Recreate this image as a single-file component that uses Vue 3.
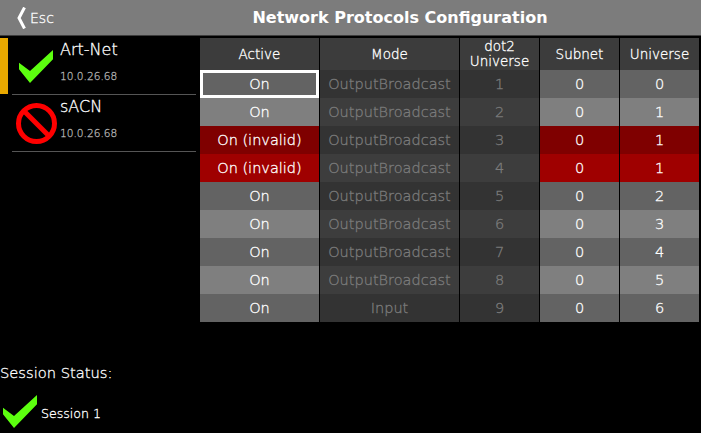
<script setup>
const rows = [
  { active: 'On', mode: 'OutputBroadcast', dot: 1, subnet: 0, universe: 0, selected: true },
  { active: 'On', mode: 'OutputBroadcast', dot: 2, subnet: 0, universe: 1 },
  { active: 'On (invalid)', mode: 'OutputBroadcast', dot: 3, subnet: 0, universe: 1, invalid: true },
  { active: 'On (invalid)', mode: 'OutputBroadcast', dot: 4, subnet: 0, universe: 1, invalid: true },
  { active: 'On', mode: 'OutputBroadcast', dot: 5, subnet: 0, universe: 2 },
  { active: 'On', mode: 'OutputBroadcast', dot: 6, subnet: 0, universe: 3 },
  { active: 'On', mode: 'OutputBroadcast', dot: 7, subnet: 0, universe: 4 },
  { active: 'On', mode: 'OutputBroadcast', dot: 8, subnet: 0, universe: 5 },
  { active: 'On', mode: 'Input', dot: 9, subnet: 0, universe: 6 },
]
const checkPath = 'M0 12.7 L11 21 L34 0 L34 9.3 L11 33 L0 19.3 Z'
</script>

<template>
  <div class="screen">
    <header class="topbar">
      <div class="esc">
        <svg class="chevron" width="9" height="22" viewBox="0 0 9 22">
          <path d="M7.5 0.5 L2 11 L7.5 21.5" fill="none" stroke="#fff" stroke-width="3" />
        </svg>
        <span>Esc</span>
      </div>
      <div class="title">Network Protocols Configuration</div>
    </header>

    <div class="main">
      <aside class="side">
        <div class="protocols">
          <div class="protocol selected">
            <div class="icon-box">
              <svg width="34" height="33" viewBox="0 0 34 33">
                <path :d="checkPath" fill="#5cff0f" />
              </svg>
            </div>
            <div class="proto-text">
              <div class="proto-name">Art-Net</div>
              <div class="proto-ip">10.0.26.68</div>
            </div>
          </div>
          <div class="protocol">
            <div class="icon-box">
              <svg width="41" height="41" viewBox="0 0 41 41">
                <circle cx="20.5" cy="20.5" r="18" fill="none" stroke="#ff0000" stroke-width="5" />
                <path d="M7.5 7.5 L33.5 33.5" stroke="#ff0000" stroke-width="5" />
              </svg>
            </div>
            <div class="proto-text">
              <div class="proto-name">sACN</div>
              <div class="proto-ip">10.0.26.68</div>
            </div>
          </div>
        </div>
        <div class="session">
          <div class="session-label">Session Status:</div>
          <div class="session-row">
            <svg width="34" height="33" viewBox="0 0 34 33">
              <path :d="checkPath" fill="#5cff0f" />
            </svg>
            <span>Session 1</span>
          </div>
        </div>
      </aside>

      <div class="table">
        <div class="row head">
          <div class="cell">Active</div>
          <div class="cell">Mode</div>
          <div class="cell two">dot2<br>Universe</div>
          <div class="cell">Subnet</div>
          <div class="cell">Universe</div>
        </div>
        <div v-for="(r, i) in rows" :key="i" class="row" :class="{ even: i % 2 === 1, invalid: r.invalid }">
          <div class="cell edit" :class="{ selected: r.selected }"><span>{{ r.active }}</span></div>
          <div class="cell ro">{{ r.mode }}</div>
          <div class="cell ro">{{ r.dot }}</div>
          <div class="cell edit">{{ r.subnet }}</div>
          <div class="cell edit">{{ r.universe }}</div>
        </div>
      </div>
    </div>
  </div>
</template>

<style>
html, body { background: #000; }
</style>

<style scoped>
.screen {
  width: 701px;
  height: 433px;
  background: #000;
  color: #fff;
  font-family: "DejaVu Sans", sans-serif;
  font-weight: 200;
  -webkit-text-stroke: 0.3px currentColor;
  overflow: hidden;
}
.topbar {
  height: 36px;
  box-sizing: border-box;
  background: #7c7c7c;
  border-bottom: 1px solid #3c3c3c;
  display: flex;
  align-items: center;
}
.esc {
  width: 100px;
  display: flex;
  align-items: center;
  gap: 4px;
  padding-left: 17px;
  box-sizing: border-box;
  font-size: 14px;
}
.title {
  width: 600px;
  text-align: center;
  font-size: 16px;
  font-weight: bold;
  -webkit-text-stroke: 0;
}
.main {
  display: flex;
  padding-top: 2px;
  height: 395px;
}
.side {
  width: 200px;
  display: flex;
  flex-direction: column;
  justify-content: space-between;
}
.protocol {
  height: 57px;
  margin-left: 12px;
  width: 184px;
  border-bottom: 1px solid #555;
  display: flex;
  align-items: center;
  position: relative;
  box-sizing: border-box;
}
.protocol.selected::before {
  content: '';
  position: absolute;
  left: -12px;
  top: 0;
  width: 8px;
  height: 56px;
  background: #e8a800;
}
.icon-box {
  flex: none;
  width: 48px;
  display: flex;
  justify-content: center;
}
.proto-text { align-self: flex-start; }
.proto-name { font-size: 16px; line-height: 24px; }
.proto-ip { font-size: 10.6px; line-height: 14px; color: #b4b4b4; margin-top: 7px; }
.session-label { font-size: 14.7px; line-height: 20px; margin-bottom: 1px; }
.session-row {
  display: flex;
  align-items: center;
  gap: 4px;
  margin: 12px 0 5px 3px;
  font-size: 12.6px;
  height: 33px;
}
.session-row span { padding-top: 3px; }
.table { width: 500px; }
.row {
  display: grid;
  grid-template-columns: 119px 139px 79px 79px 79px;
  column-gap: 1px;
  height: 28px;
}
.row.head { height: 32px; }
.cell {
  display: flex;
  align-items: center;
  justify-content: center;
  text-align: center;
  font-size: 14.5px;
  box-sizing: border-box;
  background: #636363;
}
.head .cell { background: #3c3c3c; font-size: 13.5px; }
.two { line-height: 15px; }
.even .edit { background: #7f7f7f; }
.ro { background: #333; color: #7c7c7c; }
.even .ro { background: #3d3d3d; }
.invalid .edit { background: #7f0000; }
.invalid.even .edit { background: #9f0000; }
.cell.selected { border: 3px solid #fff; }
</style>
